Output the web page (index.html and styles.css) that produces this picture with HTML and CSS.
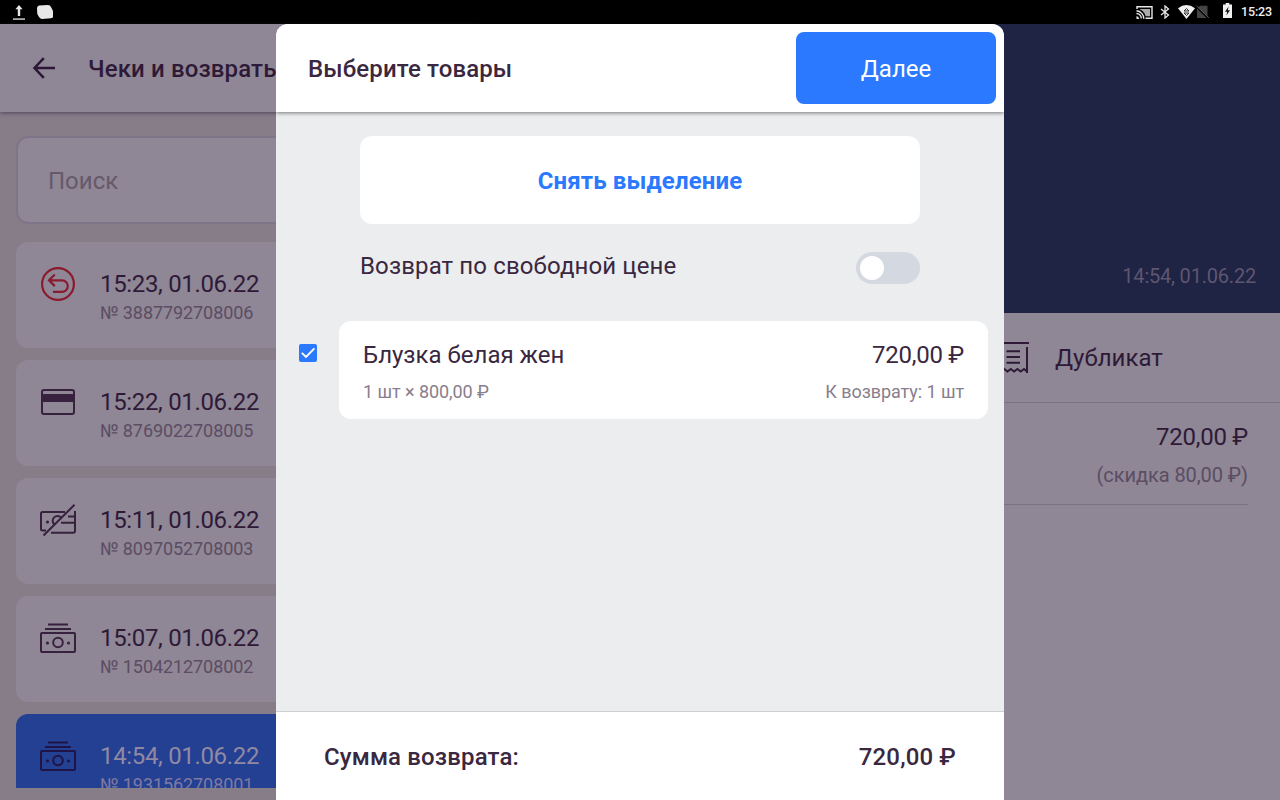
FILE: index.html
```html
<!DOCTYPE html>
<html lang="ru">
<head>
    <meta charset="UTF-8">
    <meta name="viewport" content="width=device-width, initial-scale=1.0">
    <title>Выберите товары</title>
    <link rel="stylesheet" href="styles.css">
</head>
<body>
    <svg class="defs" width="0" height="0">
        <symbol id="cash" viewBox="0 0 36 32">
            <g fill="none" stroke="currentColor" stroke-width="2">
                <path d="M8 2.500h20M5 7h26"/>
                <rect x="1" y="11" width="34" height="19" rx="1"/>
                <circle cx="18" cy="20.500" r="4.800"/>
            </g>
            <circle cx="7.500" cy="21" r="1.600" fill="currentColor"/>
            <circle cx="28.500" cy="21" r="1.600" fill="currentColor"/>
        </symbol>
    </svg>

    <div class="statusbar">
        <div class="status-left">
            <svg width="12" height="16" viewBox="0 0 12 16"><path d="M6 0l3.600 4.200H7.200V11H4.800V4.200H2.400z" fill="#e8e8e8"/><path d="M0 13.200h12v1.800H0z" fill="#aaa"/></svg>
            <svg width="16" height="14" viewBox="0 0 16 14"><path d="M2 .5L11 0q2 .2 3 2l2 4v6q0 1-2 1.200L5 14q-1.500 0-3-2L.3 9 0 3Q.2 1 2 .5z" fill="#e8e8e8"/></svg>
        </div>
        <div class="status-right">
            <svg class="ic-cast" width="17" height="13" viewBox="0 0 17 13"><g fill="none" stroke="#e8e8e8" stroke-width="1.400"><path d="M1 3V.8h15v11.400H9.500"/><path d="M.5 4.800a8 8 0 0 1 7.300 8M.5 7.500a5 5 0 0 1 4.800 5"/></g><path d="M4 3h10v7.200H9.600Q8.200 5.200 4 3.600z" fill="#aaa"/><path d="M.5 10a3 3 0 0 1 2.500 3H.5z" fill="#e8e8e8"/></svg>
            <svg class="ic-bt" width="10" height="14" viewBox="0 0 10 14"><path d="M1 4l7.500 6L5 13V1l3.500 3L1 10" fill="none" stroke="#e8e8e8" stroke-width="1.300"/></svg>
            <svg class="ic-wifi" width="17" height="14" viewBox="0 0 17 14"><path d="M0 3.200Q8.500-3 17 3.200L8.500 14z" fill="#f0f0f0"/><path d="M6 6l2.500-2.500L11 6zM6 8l2.500 2.500L11 8z" fill="#eee" stroke="#333" stroke-width="1"/></svg>
            <svg class="ic-sim" width="13" height="14" viewBox="0 0 13 14"><path d="M1 3.500L4 .8h7.500V13H1z" fill="#444"/><path d="M0 1.500L12.500 13.500" stroke="#000" stroke-width="1.800"/><path d="M.5.8L12.800 12.800" stroke="#777" stroke-width=".8"/></svg>
            <svg class="ic-bat" width="9" height="15" viewBox="0 0 9 15"><path d="M0 1.500h2.700V0h3.600v1.500H9V15H0z" fill="#f0f0f0"/><path d="M5.600 3.500L2 8.800h2.200L3.400 12.500 7 7.200H4.800z" fill="#111"/></svg>
            <span class="clock">15:23</span>
        </div>
    </div>

    <div class="screen">
        <div class="receipts">
            <div class="receipts-header">
                <svg width="24" height="22" viewBox="0 0 24 22"><path d="M23 11H3M11.800 1.200L2.500 11l9.300 9.800" fill="none" stroke="#2c1735" stroke-width="2.500"/></svg>
                <h1>Чеки и возвраты</h1>
            </div>
            <div class="receipts-body">
                <div class="search">Поиск</div>
                <div class="receipt">
                    <svg class="receipt-icon refund" width="36" height="36" viewBox="0 0 36 36"><g fill="none" stroke="currentColor" stroke-width="2.200"><circle cx="18" cy="18" r="15.900"/><path d="M14.800 8.500L9 14.300l5.800 5.800M9.500 14.300H22a5.800 5.800 0 0 1 0 11.600h-9"/></g></svg>
                    <div>
                        <div class="receipt-time">15:23, 01.06.22</div>
                        <div class="receipt-num">№ 3887792708006</div>
                    </div>
                </div>
                <div class="receipt">
                    <svg class="receipt-icon" width="36" height="36" viewBox="0 0 36 36"><rect x="2" y="6" width="32" height="24" rx="2" fill="none" stroke="currentColor" stroke-width="2"/><path d="M2 10h32v8H2z" fill="currentColor"/></svg>
                    <div>
                        <div class="receipt-time">15:22, 01.06.22</div>
                        <div class="receipt-num">№ 8769022708005</div>
                    </div>
                </div>
                <div class="receipt">
                    <svg class="receipt-icon crossed" width="36" height="36" viewBox="0 0 36 36"><g fill="none" stroke="currentColor" stroke-width="2"><path d="M25 9H2.500Q1 9 1 10.500V26q0 1.500 1.500 1.500H6M35 8v20q0 1.800-1.800 1.800H11M3.500 32.500L34.500 1.800M14 21.200A4.800 4.800 0 0 1 21 14.500M28 13.500H34M21 19.800h13"/></g><circle cx="7.500" cy="19" r="1.600" fill="currentColor"/></svg>
                    <div>
                        <div class="receipt-time">15:11, 01.06.22</div>
                        <div class="receipt-num">№ 8097052708003</div>
                    </div>
                </div>
                <div class="receipt">
                    <svg class="receipt-icon cash" width="36" height="32"><use href="#cash"/></svg>
                    <div>
                        <div class="receipt-time">15:07, 01.06.22</div>
                        <div class="receipt-num">№ 1504212708002</div>
                    </div>
                </div>
                <div class="receipt active">
                    <svg class="receipt-icon cash" width="36" height="32"><use href="#cash"/></svg>
                    <div>
                        <div class="receipt-time">14:54, 01.06.22</div>
                        <div class="receipt-num">№ 1931562708001</div>
                    </div>
                </div>
            </div>
        </div>

        <div class="details">
            <div class="details-header">14:54, 01.06.22</div>
            <div class="details-action">
                <svg width="30" height="32" viewBox="0 0 30 32"><g fill="none" stroke="#2e1a37" stroke-width="2"><path d="M0 1h30M2 5v25M28 5v26M7.500 9.200H21M7.500 15H21M7.500 20.700H21"/><path d="M2 29.500l3.200-2.500 3.300 2.500 3.300-2.500 3.300 2.500 3.300-2.500 3.300 2.500 3.300-2.500 3 2.500"/></g></svg>
                <span>Дубликат</span>
            </div>
            <div class="details-item">
                <div class="price">720,00 ₽</div>
                <div class="details-discount">(скидка 80,00 ₽)</div>
            </div>
        </div>

        <div class="modal">
            <div class="modal-header">
                <h2>Выберите товары</h2>
                <button class="btn-next">Далее</button>
            </div>
            <div class="modal-body">
                <button class="btn-clear">Снять выделение</button>
                <div class="free-price">
                    <span>Возврат по свободной цене</span>
                    <span class="toggle"></span>
                </div>
                <div class="product-row">
                    <svg class="check" width="18" height="18" viewBox="0 0 18 18"><rect width="18" height="18" rx="2" fill="#2a79ff"/><path d="M2.800 8.800l4.200 4.200 8.400-8.600" fill="none" stroke="#fff" stroke-width="1.900"/></svg>
                    <div class="product">
                        <div class="product-line">
                            <span>Блузка белая жен</span>
                            <span class="price">720,00 ₽</span>
                        </div>
                        <div class="product-line small">
                            <span>1 шт × 800,00 ₽</span>
                            <span>К возврату: 1 шт</span>
                        </div>
                    </div>
                </div>
            </div>
            <div class="modal-footer">
                <span>Сумма возврата:</span>
                <span>720,00 ₽</span>
            </div>
        </div>
    </div>
</body>
</html>
```
FILE: styles.css
```css
* {
    box-sizing: border-box;
}
body {
    margin: 0;
    height: 800px;
    overflow: hidden;
    font-family: Roboto, sans-serif;
    font-size: 24px;
    line-height: 28px;
    color: #3a2740;
}
h1, h2 {
    margin: 0;
    padding-top: 2px;
    font-size: 24px;
    font-weight: 500;
    letter-spacing: 0.13px;
    white-space: nowrap;
}
button {
    border: none;
    padding: 2px 0 0;
    font-family: inherit;
    font-size: 24px;
}
.defs {
    display: block;
}

/* status bar */
.statusbar {
    height: 24px;
    background: #000;
    display: flex;
    justify-content: space-between;
    padding: 0 8px 0 13px;
}
.status-left {
    display: flex;
    gap: 12px;
    padding-top: 5px;
}
.status-right {
    display: flex;
    align-items: center;
}
.ic-cast {
    margin-right: 7px;
}
.ic-bt {
    margin-right: 8px;
}
.ic-wifi {
    margin-right: 1px;
}
.ic-sim {
    margin-right: 14px;
}
.ic-bat {
    margin: 0 9px 3px 0;
}
.clock {
    width: 31px;
    font-size: 12.5px;
    font-weight: 500;
    line-height: 24px;
    letter-spacing: -0.15px;
    color: #f0f0f0;
}

.screen {
    position: relative;
    height: 776px;
    display: flex;
    background: #8f8696;
}

/* receipts list */
.receipts {
    width: 480px;
    display: flex;
    flex-direction: column;
    background: #867d89;
    color: #2e1a37;
}
.receipts-header {
    height: 88px;
    display: flex;
    align-items: center;
    gap: 32px;
    padding: 0 32px;
    background: #8f8696;
    box-shadow: 0 1px 4px rgba(46, 26, 55, 0.6);
}
.receipts-body {
    height: 676px;
    overflow: hidden;
    padding: 24px 16px 0;
}
.search {
    height: 88px;
    padding: 29px 30px;
    margin-bottom: 18px;
    border: 2px solid #7f7588;
    border-radius: 12px;
    background: #8f8696;
    color: #655a6a;
}
.receipt {
    height: 106px;
    display: flex;
    gap: 24px;
    padding: 28px 24px 0;
    margin-bottom: 12px;
    border-radius: 12px;
    background: #8f8696;
}
.receipt-icon {
    margin-top: -4px;
    color: #38213f;
}
.receipt-icon.crossed {
    margin-top: -3px;
}
.receipt-icon.cash {
    margin-top: -2px;
}
.receipt-icon.refund {
    color: #8a1b2e;
}
.receipt-time {
    letter-spacing: -0.33px;
}
.receipt-num {
    font-size: 18px;
    line-height: 30px;
    letter-spacing: -0.08px;
    color: #5b4d63;
}
.receipt.active {
    background: #234092;
    color: #9188a4;
}
.receipt.active .receipt-icon {
    color: #1e1448;
}
.receipt.active .receipt-num {
    color: #8179a0;
}

/* receipt details */
.details {
    flex: 1;
    color: #2e1a37;
}
.details-header {
    height: 289px;
    padding: 238px 24px 0;
    background: #1f2344;
    font-size: 20px;
    letter-spacing: -0.2px;
    text-align: right;
    color: #5e5670;
}
.details-action {
    height: 90px;
    display: flex;
    align-items: center;
    gap: 26px;
    padding-left: 519px;
    border-bottom: 1px solid #7c7285;
}
.details-item {
    margin: 0 32px;
    padding: 20px 0 15px;
    border-bottom: 1px solid #7c7285;
    text-align: right;
}
.details-discount {
    margin-top: 10px;
    font-size: 20px;
    letter-spacing: -0.06px;
    color: #5b4d63;
}
.price {
    letter-spacing: -0.25px;
}

/* modal */
.modal {
    position: absolute;
    top: 0;
    left: 276px;
    width: 728px;
    height: 776px;
    display: flex;
    flex-direction: column;
    border-radius: 12px 12px 0 0;
    background: #ecedef;
    overflow: hidden;
}
.modal-header {
    height: 88px;
    display: flex;
    align-items: center;
    justify-content: space-between;
    padding: 0 8px 0 32px;
    background: #fff;
    box-shadow: 0 1px 4px rgba(0, 0, 0, 0.5);
}
.btn-next {
    width: 200px;
    height: 72px;
    border-radius: 8px;
    background: #2a79ff;
    color: #fff;
}
.modal-body {
    flex: 1;
    padding-top: 24px;
}
.btn-clear {
    display: block;
    width: 560px;
    height: 88px;
    margin: 0 auto;
    border-radius: 12px;
    background: #fff;
    color: #2a79ff;
    font-weight: 700;
    letter-spacing: 0.13px;
}
.free-price {
    width: 560px;
    margin: 28px auto 37px;
    display: flex;
    justify-content: space-between;
    letter-spacing: 0.12px;
}
.toggle {
    width: 64px;
    height: 32px;
    padding: 4px;
    border-radius: 16px;
    background: #d4d8e0;
}
.toggle::before {
    content: "";
    display: block;
    width: 24px;
    height: 24px;
    border-radius: 50%;
    background: #fff;
}
.product-row {
    display: flex;
    gap: 22px;
    padding: 0 16px 0 23px;
}
.check {
    margin-top: 23px;
}
.product {
    flex: 1;
    height: 98px;
    padding: 20px 24px 0;
    border-radius: 12px;
    background: #fff;
}
.product-line {
    display: flex;
    justify-content: space-between;
}
.product-line.small {
    margin-top: 9px;
    font-size: 18px;
    letter-spacing: -0.06px;
    color: #897e8d;
}
.modal-footer {
    height: 89px;
    display: flex;
    align-items: center;
    justify-content: space-between;
    padding: 2px 48px 0;
    border-top: 1px solid #cfd0d4;
    background: #fff;
    font-weight: 500;
    letter-spacing: 0.15px;
}
```
